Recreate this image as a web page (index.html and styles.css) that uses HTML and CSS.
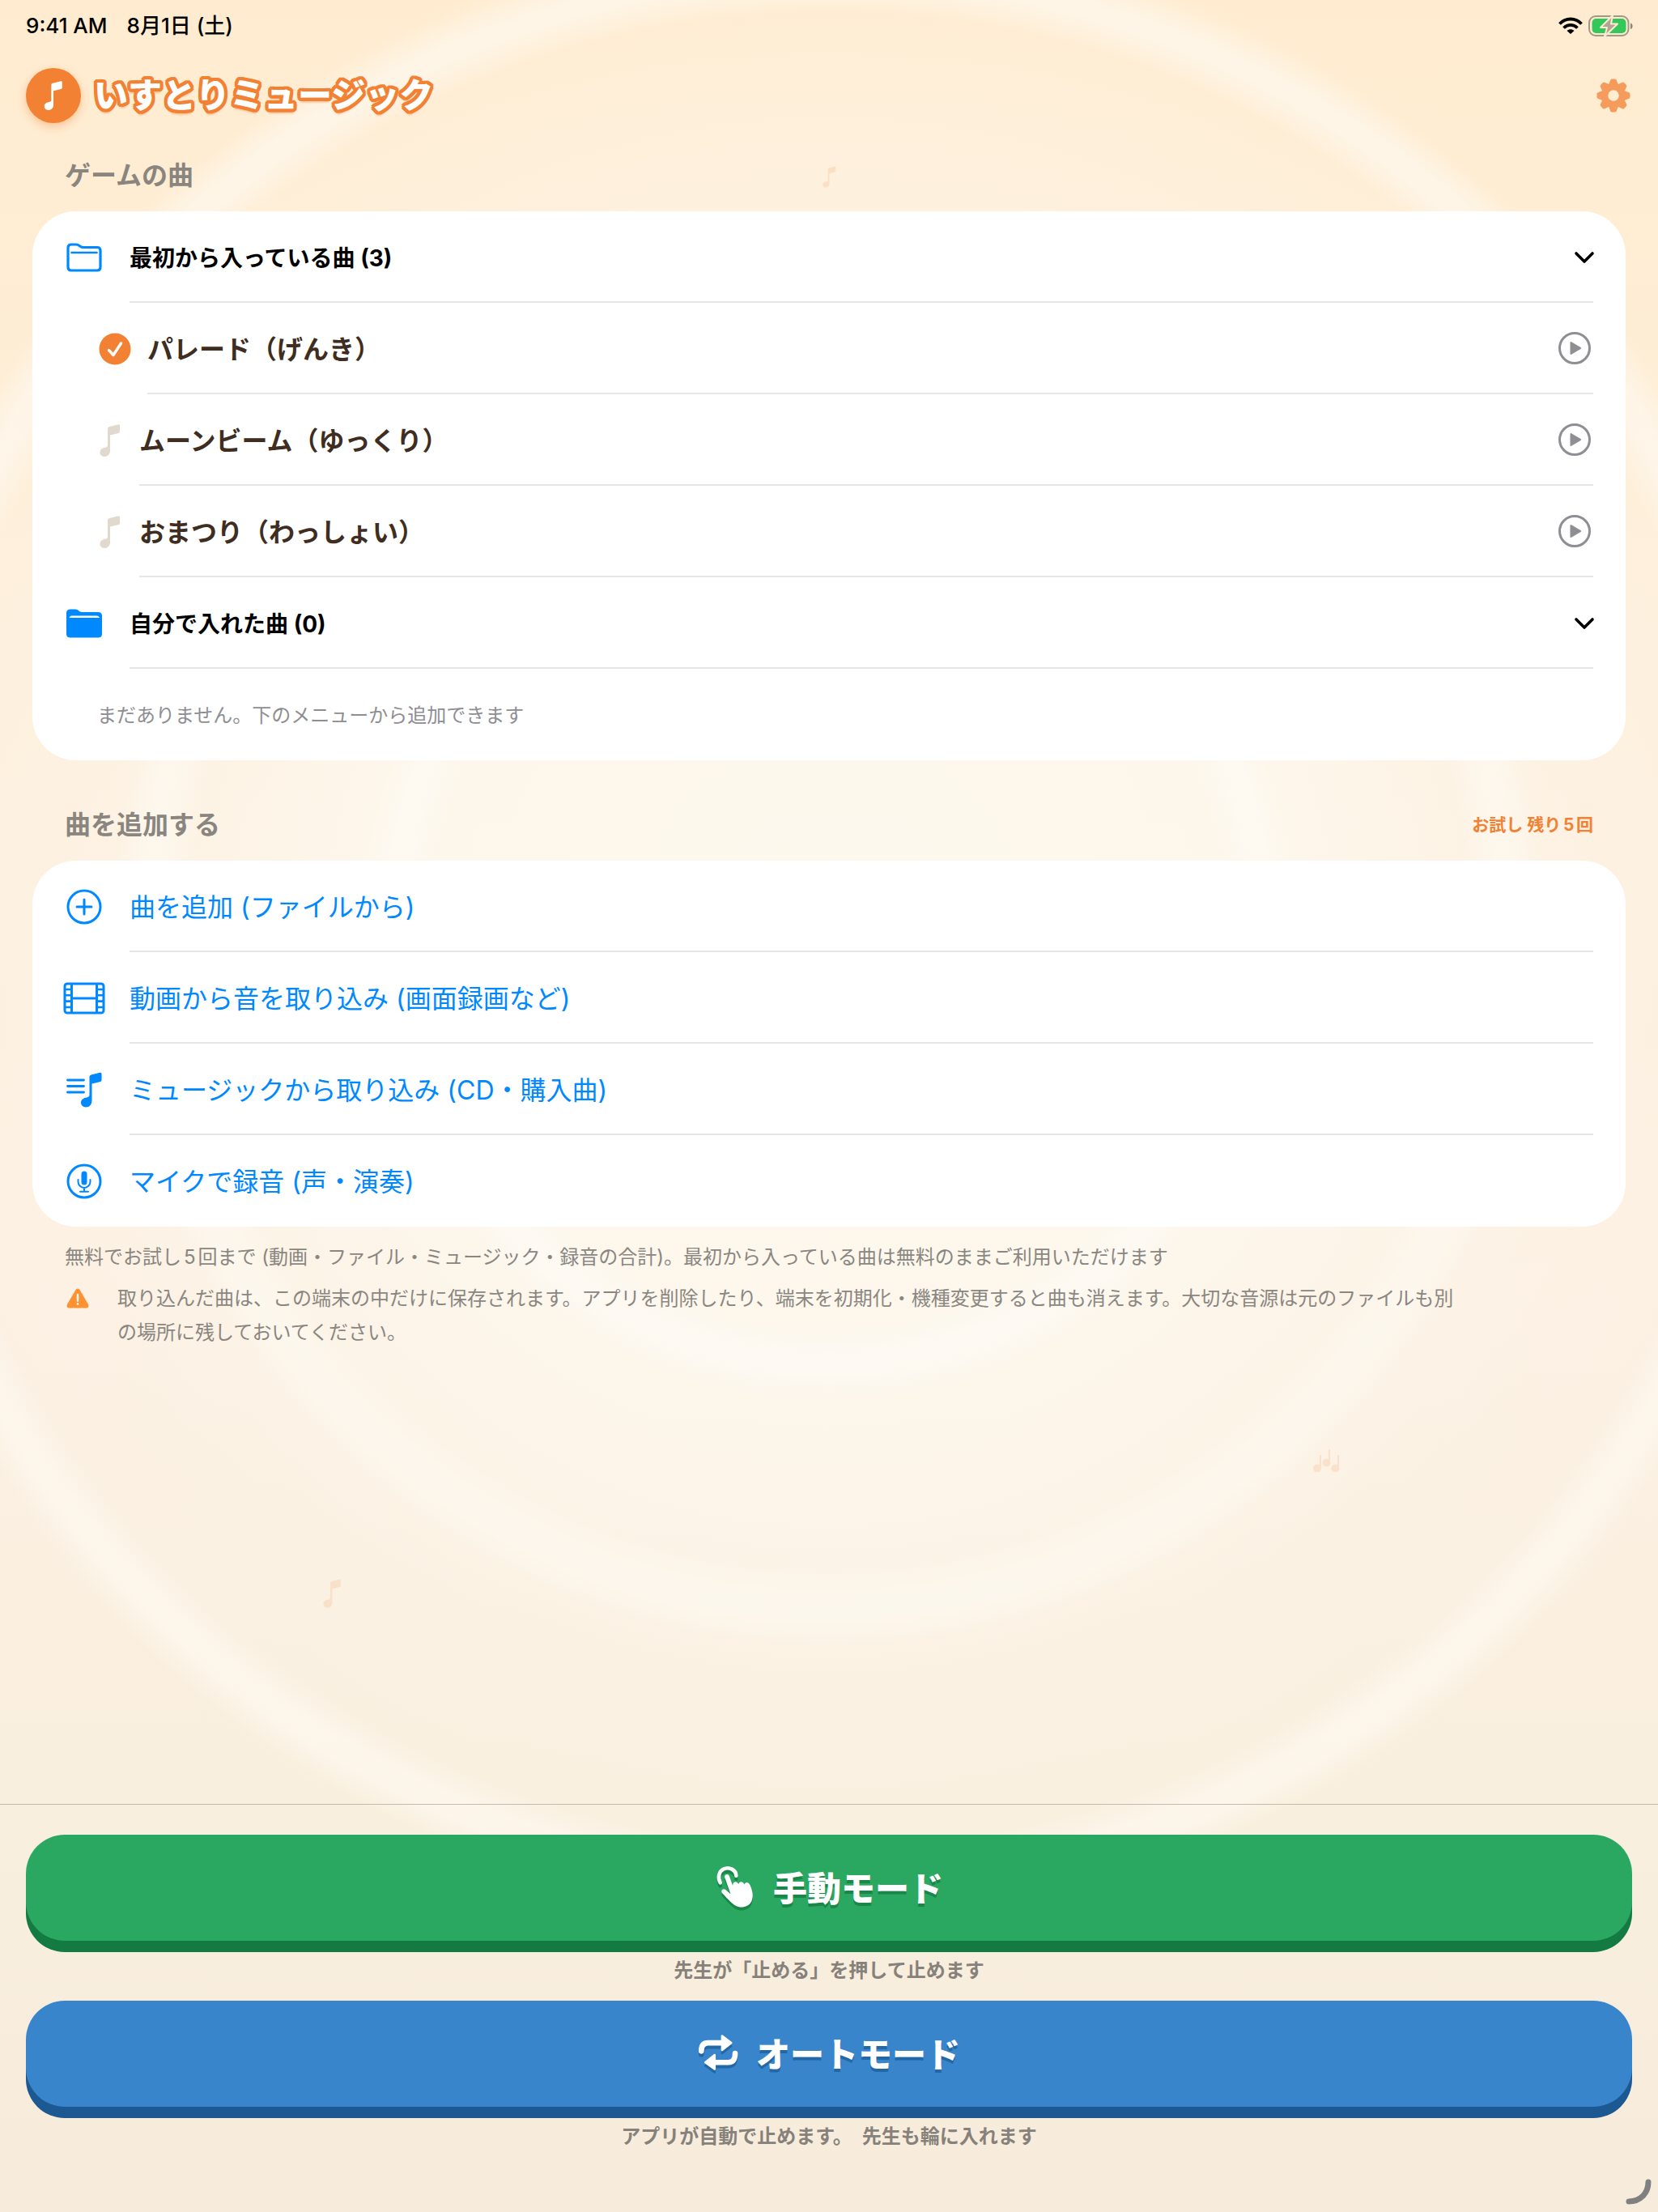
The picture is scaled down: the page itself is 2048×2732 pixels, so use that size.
FILE: index.html
```html
<!DOCTYPE html>
<html lang="ja">
<head>
    <meta charset="UTF-8">
    <meta name="viewport" content="width=device-width, initial-scale=1.0">
    <title>いすとりミュージック</title>
    <link rel="stylesheet" href="styles.css">
</head>
<body>
    <!-- Shared shapes -->
    <svg width="0" height="0" class="defs" aria-hidden="true">
        <symbol id="note" viewBox="0 0 26 40">
            <path d="M10 5.500Q10 3.500 12 3L23.500 .2Q25 0 25 1.500V9Q25 10.500 23.500 11L13 13.500V33C13 37 10 40 6 40C3 40 .5 38 .5 34.800C.5 31 3.500 29.500 6.500 28.800C9 28.300 10 27.800 10 26Z"/>
        </symbol>
        <symbol id="play" viewBox="0 0 44 44">
            <circle cx="22" cy="22" r="18.500" fill="none" stroke="currentColor" stroke-width="3"/>
            <path d="M16.500 15.200Q16.500 13.500 18 14.200L29.500 21Q31 22 29.500 23L18 29.800Q16.500 30.500 16.500 28.800Z" fill="currentColor"/>
        </symbol>
        <symbol id="chevron" viewBox="0 0 28 18">
            <path d="M4 4L14 14L24 4" fill="none" stroke="currentColor" stroke-width="3.600" stroke-linecap="round" stroke-linejoin="round"/>
        </symbol>
    </svg>

    <!-- Faint notes in the background -->
    <svg class="bg-note bg-note-top"><use href="#note"/></svg>
    <svg class="bg-note bg-note-left"><use href="#note"/></svg>
    <svg class="bg-note bg-note-right" viewBox="0 0 33 28">
        <path d="M8 7h2v16h-2zM19 0h2v16h-2zM30 7h2v16h-2z"/>
        <circle cx="5" cy="23.500" r="5"/><circle cx="16.500" cy="16.500" r="5"/><circle cx="27.500" cy="23.500" r="5"/>
    </svg>

    <div class="status-bar">
        <span>9:41 AM</span>
        <span>8月1日 (土)</span>
        <div class="status-icons">
            <svg class="wifi" viewBox="0 0 30 22" fill="none" stroke="#000" stroke-width="3.800">
                <path d="M1.500 8.500C9 .5 21 .5 28.500 8.500"/>
                <path d="M6.500 13.500C11.500 8.700 18.500 8.700 23.500 13.500"/>
                <path d="M15 21L10.500 17C13 14.500 17 14.500 19.500 17Z" fill="#000" stroke="none"/>
            </svg>
            <svg class="battery" viewBox="0 0 56 28">
                <rect x="1" y="2" width="48.500" height="24" rx="8" fill="none" stroke="#a39885" stroke-width="2"/>
                <rect x="4.500" y="5" width="42" height="18" rx="5" fill="#34c759"/>
                <path d="M52 10.500C55.500 11.500 55.500 17 52 18Z" fill="#8d8475"/>
                <path d="M30 1L15 16H23L20 27L36 11.500H28Z" fill="#b1a592" stroke="#feecd1" stroke-width="2" stroke-linejoin="round"/>
            </svg>
        </div>
    </div>

    <header class="header">
        <span class="logo"><svg><use href="#note"/></svg></span>
        <h1>いすとりミュージック</h1>
        <button type="button" class="settings" aria-label="設定">
            <svg viewBox="-21 -21 42 42">
                <circle r="11" fill="none" stroke="currentColor" stroke-width="8.500"/>
                <g id="teeth">
                    <path id="tooth" d="M-6.500 -12L-4 -18.500Q-3.500 -20.500 -2 -20.500H2Q3.500 -20.500 4 -18.500L6.500 -12Z"/>
                    <use href="#tooth" transform="rotate(45)"/>
                    <use href="#tooth" transform="rotate(90)"/>
                    <use href="#tooth" transform="rotate(135)"/>
                </g>
                <use href="#teeth" transform="rotate(180)"/>
            </svg>
        </button>
    </header>

    <main>
        <!-- Songs -->
        <div class="section-head">
            <h2>ゲームの曲</h2>
        </div>
        <div class="card">
            <button type="button" class="row folder" aria-expanded="true">
                <span class="icon">
                    <svg width="44" height="36" viewBox="0 0 44 36" fill="none" stroke="currentColor" stroke-width="3.200" stroke-linejoin="round">
                        <path d="M2 30V6Q2 2 6 2H12Q14 2 16 3.500L17.500 4.500Q19 5.500 21 5.500H38Q42 5.500 42 9.500V30Q42 34 38 34H6Q2 34 2 30Z"/>
                        <path d="M6.500 12H37.500" stroke-linecap="round" stroke-width="2.600"/>
                    </svg>
                </span>
                <span class="row-body">最初から入っている曲 (3)<svg class="chevron"><use href="#chevron"/></svg></span>
            </button>
            <div class="row song selected">
                <span class="icon">
                    <svg width="40" height="40" viewBox="0 0 40 40">
                        <circle cx="20" cy="20" r="19.500" fill="#f28133"/>
                        <path d="M12.500 21.500L18 27.500L27.500 13" fill="none" stroke="#fff" stroke-width="3.400" stroke-linecap="round" stroke-linejoin="round"/>
                    </svg>
                </span>
                <div class="row-body">
                    <button type="button" class="song-name">パレード（げんき）</button>
                    <button type="button" class="play" aria-label="再生"><svg><use href="#play"/></svg></button>
                </div>
            </div>
            <div class="row song">
                <span class="icon"><svg width="26" height="40"><use href="#note"/></svg></span>
                <div class="row-body">
                    <button type="button" class="song-name">ムーンビーム（ゆっくり）</button>
                    <button type="button" class="play" aria-label="再生"><svg><use href="#play"/></svg></button>
                </div>
            </div>
            <div class="row song">
                <span class="icon"><svg width="26" height="40"><use href="#note"/></svg></span>
                <div class="row-body">
                    <button type="button" class="song-name">おまつり（わっしょい）</button>
                    <button type="button" class="play" aria-label="再生"><svg><use href="#play"/></svg></button>
                </div>
            </div>
            <button type="button" class="row folder" aria-expanded="true">
                <span class="icon">
                    <svg width="44" height="36" viewBox="0 0 44 36">
                        <path d="M0 31V5Q0 .5 5 .5H11Q13.500 .5 15 2L16 3Q17.500 4 19.500 4H39Q44 4 44 8.500V31Q44 35.500 39 35.500H5Q0 35.500 0 31Z" fill="currentColor"/>
                        <path d="M4 10.500Q4.500 9 7 9H37Q40 9 40.500 10.500Z" fill="#fff" stroke="#fff"/>
                    </svg>
                </span>
                <span class="row-body">自分で入れた曲 (0)<svg class="chevron"><use href="#chevron"/></svg></span>
            </button>
            <p class="row empty">まだありません。下のメニューから追加できます</p>
        </div>

        <!-- Import menu -->
        <div class="section-head">
            <h2>曲を追加する</h2>
            <span class="trial">お試し 残り5回</span>
        </div>
        <div class="card">
            <button type="button" class="row add">
                <span class="icon">
                    <svg width="44" height="44" viewBox="0 0 44 44" fill="none" stroke="currentColor" stroke-width="3" stroke-linecap="round">
                        <circle cx="22" cy="22" r="20"/>
                        <path d="M22 13V31M13 22H31"/>
                    </svg>
                </span>
                <span class="row-body">曲を追加 (ファイルから)</span>
            </button>
            <button type="button" class="row add">
                <span class="icon">
                    <svg width="52" height="40" viewBox="0 0 52 40" fill="none" stroke="currentColor" stroke-width="3">
                        <rect x="2" y="2" width="48" height="36" rx="3"/>
                        <path d="M10.500 2V38M41.500 2V38M10.500 20H41.500"/>
                        <path d="M2 9H10M2 16.200H10M2 23.600H10M2 31H10M42 9H50M42 16.200H50M42 23.600H50M42 31H50" stroke-width="2.600"/>
                    </svg>
                </span>
                <span class="row-body">動画から音を取り込み (画面録画など)</span>
            </button>
            <button type="button" class="row add">
                <span class="icon">
                    <svg width="44" height="44" viewBox="0 0 44 44" fill="currentColor">
                        <path d="M1.500 10H21.500M1.500 17.500H21.500M1.500 25H21.500" stroke="currentColor" stroke-width="2.800" stroke-linecap="round"/>
                        <path d="M28.500 6Q28.500 4 30.500 3.500L41.500 .8Q43.500 .3 43.500 2.200V10Q43.500 11.500 42 12L31.500 14.500V35C31.500 40 28.500 43.500 24 43.500C20.500 43.500 18 41 18 37.800C18 34.500 20.500 32.500 24 31.700C27 31 28.500 30.500 28.500 28.500Z"/>
                    </svg>
                </span>
                <span class="row-body">ミュージックから取り込み (CD・購入曲)</span>
            </button>
            <button type="button" class="row add">
                <span class="icon">
                    <svg width="44" height="44" viewBox="0 0 44 44" fill="none" stroke="currentColor" stroke-width="3" stroke-linecap="round">
                        <circle cx="22" cy="22" r="20"/>
                        <rect x="18.500" y="9.500" width="7" height="17" rx="3.500" fill="currentColor" stroke="none"/>
                        <path d="M14.500 20V22.500A7.500 7.500 0 0 0 29.500 22.500V20M22 30.500V34.500M17 34.800H27" stroke-width="2"/>
                    </svg>
                </span>
                <span class="row-body">マイクで録音 (声・演奏)</span>
            </button>
        </div>

        <div class="notes">
            <p>無料でお試し5回まで (動画・ファイル・ミュージック・録音の合計)。最初から入っている曲は無料のままご利用いただけます</p>
            <div class="warning">
                <svg viewBox="0 0 28 25">
                    <path d="M11.500 2Q14 -1 16.500 2L27 20Q28.500 24.500 24.500 24.500H3.500Q-.5 24.500 1 20Z" fill="#ff9230"/>
                    <path d="M14 8V15.500M14 19.200V19.600" stroke="#fff" stroke-width="2.400" stroke-linecap="round"/>
                </svg>
                <p>取り込んだ曲は、この端末の中だけに保存されます。アプリを削除したり、端末を初期化・機種変更すると曲も消えます。大切な音源は元のファイルも別の場所に残しておいてください。</p>
            </div>
        </div>
    </main>

    <!-- Mode buttons -->
    <footer class="modes">
        <button type="button" class="mode manual">
            <svg viewBox="315 250 150 165">
                <path d="M334 318C324 300 328 276 346 267C368 256 394 270 394 292" fill="none" stroke="#fff" stroke-width="14" stroke-linecap="round"/>
                <path d="M351 298C348 286 364 282 368 293L382 332C378 312 398 310 403 324C405 311 421 312 425 325C429 312 443 316 447 329C456 348 460 370 452 388C441 410 412 416 392 405C376 396 358 374 341 357C334 347 345 338 354 345L373 361Z" fill="#fff"/>
            </svg>
            手動モード
        </button>
        <p>先生が「止める」を押して止めます</p>
        <button type="button" class="mode auto">
            <svg viewBox="252 878 152 148">
                <path d="M265 947C265 925 274 916 290 916H340M392 955C392 980 382 989 366 989H318" fill="none" stroke="#fff" stroke-width="20" stroke-linecap="round"/>
                <path d="M343 890L377 916L343 943ZM315 961L280 989L315 1014Z" fill="#fff" stroke="#fff" stroke-width="8" stroke-linejoin="round"/>
            </svg>
            オートモード
        </button>
        <p>アプリが自動で止めます。　先生も輪に入れます</p>
    </footer>

    <svg class="corner" viewBox="0 0 34 34">
        <path d="M29 5C29 19 19 29 5 29" fill="none" stroke="#808080" stroke-width="7" stroke-linecap="round"/>
    </svg>
</body>
</html>
```
FILE: styles.css
```css
* {
    box-sizing: border-box;
}
body {
    position: relative;
    display: flex;
    flex-direction: column;
    min-height: 100vh;
    margin: 0;
    font-family: Inter, "Noto Sans CJK JP", sans-serif;
    font-size: 24px;
    color: #000;
    text-autospace: normal;
    background:
        radial-gradient(circle at 50% 42%,
            transparent 26%, rgba(255, 253, 250, 0.4) 28%, rgba(255, 253, 250, 0.4) 29%, transparent 31%,
            transparent 42%, rgba(253, 250, 242, 0.6) 44%, rgba(253, 250, 242, 0.6) 45%, transparent 47%,
            transparent 60%, rgba(254, 249, 240, 0.65) 62%, rgba(254, 249, 240, 0.65) 63%, transparent 65%),
        radial-gradient(circle at 50% 42%, rgba(253, 249, 238, 0.95) 0%, rgba(253, 248, 238, 0.85) 28%, rgba(252, 244, 232, 0.45) 50%, transparent 66%),
        linear-gradient(#ffecd0 0%, #feefdb 30%, #fcf0e2 60%, #f9efde 82%, #f7ecdb 100%);
}
h1, h2, p {
    margin: 0;
}
button {
    padding: 0;
    border: none;
    background: none;
    color: inherit;
    font: inherit;
    text-align: left;
    cursor: pointer;
}
svg {
    flex-shrink: 0;
}
.defs, .bg-note, .corner {
    position: absolute;
}
.bg-note {
    fill: #f28133;
    opacity: 0.14;
}
.bg-note-top {
    left: 50%;
    top: 205px;
    width: 17px;
    height: 27px;
    margin-left: -8px;
}
.bg-note-left {
    left: 19.5%;
    top: 1950px;
    width: 23px;
    height: 36px;
}
.bg-note-right {
    left: 79.2%;
    top: 1790px;
    width: 33px;
    height: 28px;
}

/* Status bar */
.status-bar {
    display: flex;
    align-items: center;
    gap: 24px;
    height: 64px;
    padding: 0 30px 0 32px;
    font-size: 26px;
    line-height: 32px;
    font-weight: 500;
    text-autospace: no-autospace;
}
.status-icons {
    display: flex;
    align-items: center;
    gap: 7px;
    margin-left: auto;
}
.wifi {
    width: 30px;
    height: 22px;
}
.battery {
    width: 56px;
    height: 28px;
}

/* Header */
.header {
    display: flex;
    align-items: center;
    gap: 16px;
    margin: 20px 34px 0 32px;
}
.logo {
    display: flex;
    align-items: center;
    justify-content: center;
    width: 68px;
    height: 68px;
    border-radius: 50%;
    background: #f28133;
    box-shadow: 0 4px 12px rgba(242, 129, 51, 0.4);
}
.logo svg {
    width: 24px;
    height: 36px;
    fill: #fff;
}
h1 {
    font-size: 42px;
    line-height: 68px;
    font-weight: 900;
    color: #fff;
    /* Round outline built from shadows */
    text-shadow:
        4px 0 #f28133, 4px 2px #f28133, 3px 3px #f28133, 2px 4px #f28133,
        0 4px #f28133, -2px 4px #f28133, -3px 3px #f28133, -4px 2px #f28133,
        -4px 0 #f28133, -4px -2px #f28133, -3px -3px #f28133, -2px -4px #f28133,
        0 -4px #f28133, 2px -4px #f28133, 3px -3px #f28133, 4px -2px #f28133,
        0 6px 2px rgba(242, 129, 51, 0.4);
}
.settings {
    width: 42px;
    height: 42px;
    margin-left: auto;
    color: #f59b5c;
}
.settings svg {
    display: block;
    fill: currentColor;
}

/* Cards */
main {
    margin: 41px 40px 0;
}
.section-head {
    display: flex;
    align-items: center;
    justify-content: space-between;
    padding: 0 40px;
    margin-bottom: 20px;
}
h2 {
    font-size: 32px;
    line-height: 48px;
    font-weight: 700;
    color: #8a857f;
}
.trial {
    font-size: 21px;
    line-height: 26px;
    font-weight: 700;
    color: #f28133;
}
.card {
    padding: 0 40px;
    border-radius: 54px;
    background: #fff;
}
.card + .section-head {
    margin-top: 56px;
}
.row {
    display: flex;
    align-items: center;
    width: 100%;
    height: 113px;
}
.icon {
    display: flex;
    align-items: center;
    justify-content: center;
    flex-shrink: 0;
    width: 48px;
    margin-right: 32px;
    color: #0088ff;
}
.row-body {
    display: flex;
    flex: 1;
    align-items: center;
    justify-content: space-between;
    height: 113px;
    border-bottom: 2px solid #e6e6e6;
}
.row:last-child .row-body {
    border-bottom-color: transparent;
}
.folder {
    font-size: 28px;
    font-weight: 700;
}
.chevron {
    width: 28px;
    height: 18px;
    margin: 3px -3px 0 0;
}
.song {
    padding-left: 40px;
    font-size: 32px;
    font-weight: 700;
    color: #3e2d20;
}
.song .icon {
    width: 32px;
    margin-right: 20px;
    fill: #e1d9cd;
}
.song.selected .icon {
    width: 44px;
    margin-right: 18px;
}
.song-name {
    flex: 1;
    padding-bottom: 2px;
}
.play {
    width: 44px;
    height: 44px;
    margin-right: 1px;
    color: #8e8e93;
}
.play svg {
    display: block;
    width: 44px;
    height: 44px;
}
.empty {
    padding: 0 0 2px 40px;
    color: #8e8e93;
}
.add {
    font-size: 32px;
    color: #0088ff;
}
.add .row-body {
    padding-bottom: 2px;
}

/* Notes under the cards */
.notes {
    padding: 17px 40px 0;
    line-height: 42px;
    color: #8a8681;
}
.warning {
    display: flex;
    gap: 35px;
    margin-top: 9px;
    padding-right: 160px;
}
.warning svg {
    width: 28px;
    height: 25px;
    margin: 8px 0 0 2px;
}

/* Mode buttons */
.modes {
    margin-top: auto;
    padding: 37px 32px 56px;
    border-top: 1px solid #c4baae;
}
.mode {
    display: flex;
    align-items: center;
    justify-content: center;
    gap: 22px;
    width: 100%;
    height: 131px;
    padding-bottom: 4px;
    margin-bottom: 14px;
    border-radius: 48px;
    font-size: 42px;
    font-weight: 900;
    color: #fff;
}
.mode svg {
    width: 50px;
    height: 54px;
}
.manual {
    background: #2aa862;
    box-shadow: 0 14px #137a41;
    text-shadow: 0 4px #1a8749;
}
.manual svg {
    filter: drop-shadow(0 4px 0 #1a8749);
}
.auto {
    background: #3885cc;
    box-shadow: 0 14px #1c5992;
    text-shadow: 0 4px #2467a5;
}
.auto svg {
    filter: drop-shadow(0 4px 0 #2467a5);
}
.modes p {
    margin-bottom: 14px;
    line-height: 46px;
    font-weight: 700;
    text-align: center;
    color: #87817b;
}
.corner {
    right: 7px;
    bottom: 8px;
    width: 34px;
    height: 34px;
}
```
